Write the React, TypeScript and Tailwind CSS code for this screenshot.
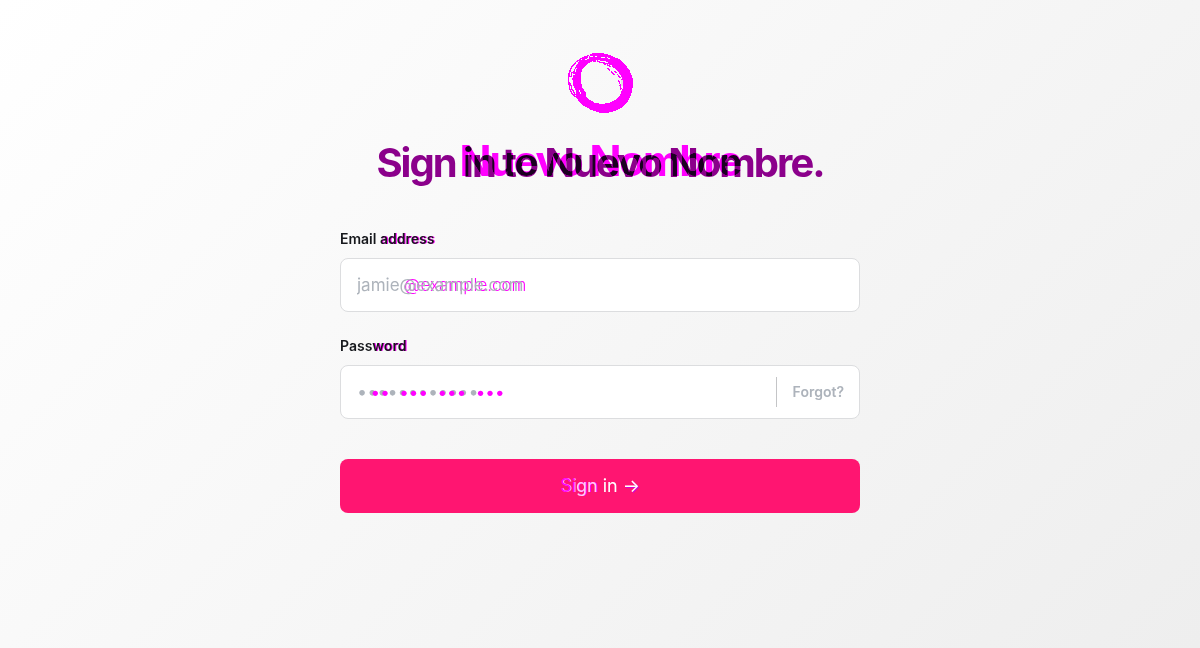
import React from "react";

function Logo() {
  return (
    <svg viewBox="0 0 240 225" className="h-[75px] w-20" fill="none" stroke="#ff00ff" shapeRendering="crispEdges" role="img" aria-label="Nuevo Nombre">
      <path
        fill="#ff00ff"
        stroke="none"
        fillRule="evenodd"
        d="M91 27 L104 24 L130 25 L155 32 L178 43 L196 58 L209 77 L218 99 L219 124 L213 149 L203 169 L189 186 L168 197 L143 204 L118 203 L94 195 L70 182 L54 166 L46 150 L48 138 L40 122 L37 102 L40 80 L49 60 L61 46 L75 37 L88 34 Z M112 45 L92 51 L79 60 L67 74 L62 91 L63 112 L68 130 L78 143 L77 152 L88 164 L106 174 L128 177 L150 173 L170 163 L180 152 L183 141 L190 127 L189 108 L182 91 L171 75 L155 60 L137 49 Z"
      />
      <path strokeWidth="4" d="M88 31 L67 39 L48 51 L35 67 L27 85 L26 108 L29 132 L38 148 L50 157 M31 115 L36 133 L46 149 M36 80 L33 96" />
      <path strokeWidth="4" strokeDasharray="10 3 15 4" d="M68 59 L86 51 L111 48 L135 57 L154 65 M126 52 L150 57 L164 68 L176 80 L190 90 M143 70 L157 84 L168 91 M164 77 L177 94 L188 105 M176 106 L184 135" />
      <path stroke="#fafafa" strokeWidth="3" strokeDasharray="14 5 8 4" d="M75 45 L91 36 L111 34 M122 36 L151 40 M50 68 L41 91 M56 134 L66 151" />
      <path stroke="#e2e2e2" strokeWidth="6" d="M187 106 L187 123" />
    </svg>
  );
}

const layer = "col-start-1 row-start-1";
const upper = "text-[42px] leading-[50px] tracking-tighter";
const lower = "pt-[2px] text-[40px] leading-[50px] tracking-tighter";

function Title() {
  return (
    <div className="grid justify-items-center whitespace-nowrap font-bold">
      <span aria-hidden="true" className={`${layer} ${upper} text-[#ff00ff]`}>Nuevo Nombre</span>
      <h1 className={`${layer} ${lower} text-[#8b008b]`}>Sign in to Nuevo Nombre.</h1>
      <div aria-hidden="true" className={`${layer} isolate grid justify-items-center bg-white mix-blend-darken`}>
        <span className={`${layer} ${upper} text-[#1a1c20]`}>Nuevo Nombre</span>
        <span className={`${layer} ${lower} bg-white text-[#1a1c20] mix-blend-lighten`}>Sign in to Nuevo Nombre.</span>
      </div>
    </div>
  );
}

export default function App() {
  return (
    <main className="flex min-h-screen flex-col items-center bg-linear-135 from-white to-[#eeeeee] px-4 pt-[45px] font-['Inter',sans-serif] text-[#16181c]">
      <Logo />
      <div className="mt-4">
        <Title />
      </div>
      <form className="mt-[41px] w-full max-w-[520px]" onSubmit={(e) => e.preventDefault()}>
        <label htmlFor="email" className="block text-sm leading-5 font-semibold">
          Email <span className="[text-shadow:1px_0_#ff00ff]">address</span>
        </label>
        <div className="mt-[9px] grid h-[54px] items-center overflow-hidden rounded-lg border border-[#dcdddf] bg-white text-[17px] leading-6">
          <span aria-hidden="true" className={`${layer} pl-[63px] font-light text-[#ff00ff]`}>@example.com</span>
          <input id="email" type="email" placeholder="jamie@example.com" className={`${layer} h-6 w-full px-4 outline-none placeholder:text-[#adb3bb]`} />
        </div>
        <label htmlFor="password" className="mt-6 block text-sm leading-5 font-semibold">
          Pass<span className="[text-shadow:1px_0_#ff00ff]">word</span>
        </label>
        <div className="mt-[9px] flex h-[54px] items-center rounded-lg border border-[#dcdddf] bg-white">
          <div className="grid flex-1 items-center leading-6">
            <input id="password" type="password" placeholder="••••••••••••" className={`${layer} h-6 w-full px-4 text-lg leading-6 outline-none placeholder:text-[#adb3bb]`} />
            <span aria-hidden="true" className={`${layer} pointer-events-none pl-5 text-[17px] text-[#ff00ff]`}>
              <span className="text-transparent">•</span>••<span className="text-transparent">•</span>•••<span className="text-transparent">•</span>•••<span className="text-transparent">•</span>•••
            </span>
          </div>
          <a href="#forgot" className="flex h-[30px] items-center border-l border-[#c4c5c7] pr-[15px] pl-4 text-sm font-semibold text-[#adb3bb]">Forgot?</a>
        </div>
        <button type="submit" className="mt-10 h-[54px] w-full rounded-lg bg-[#ff1571] text-lg text-white">
          <span className="text-[#ff00ff] [text-shadow:1px_0_#ffb8e8]">Si</span>
          <span className="text-[#ffd0f0] [text-shadow:1px_0_#ff00ff]">gn</span> in <span className="[text-shadow:1px_1px_#d600d6]">→</span>
        </button>
      </form>
    </main>
  );
}
